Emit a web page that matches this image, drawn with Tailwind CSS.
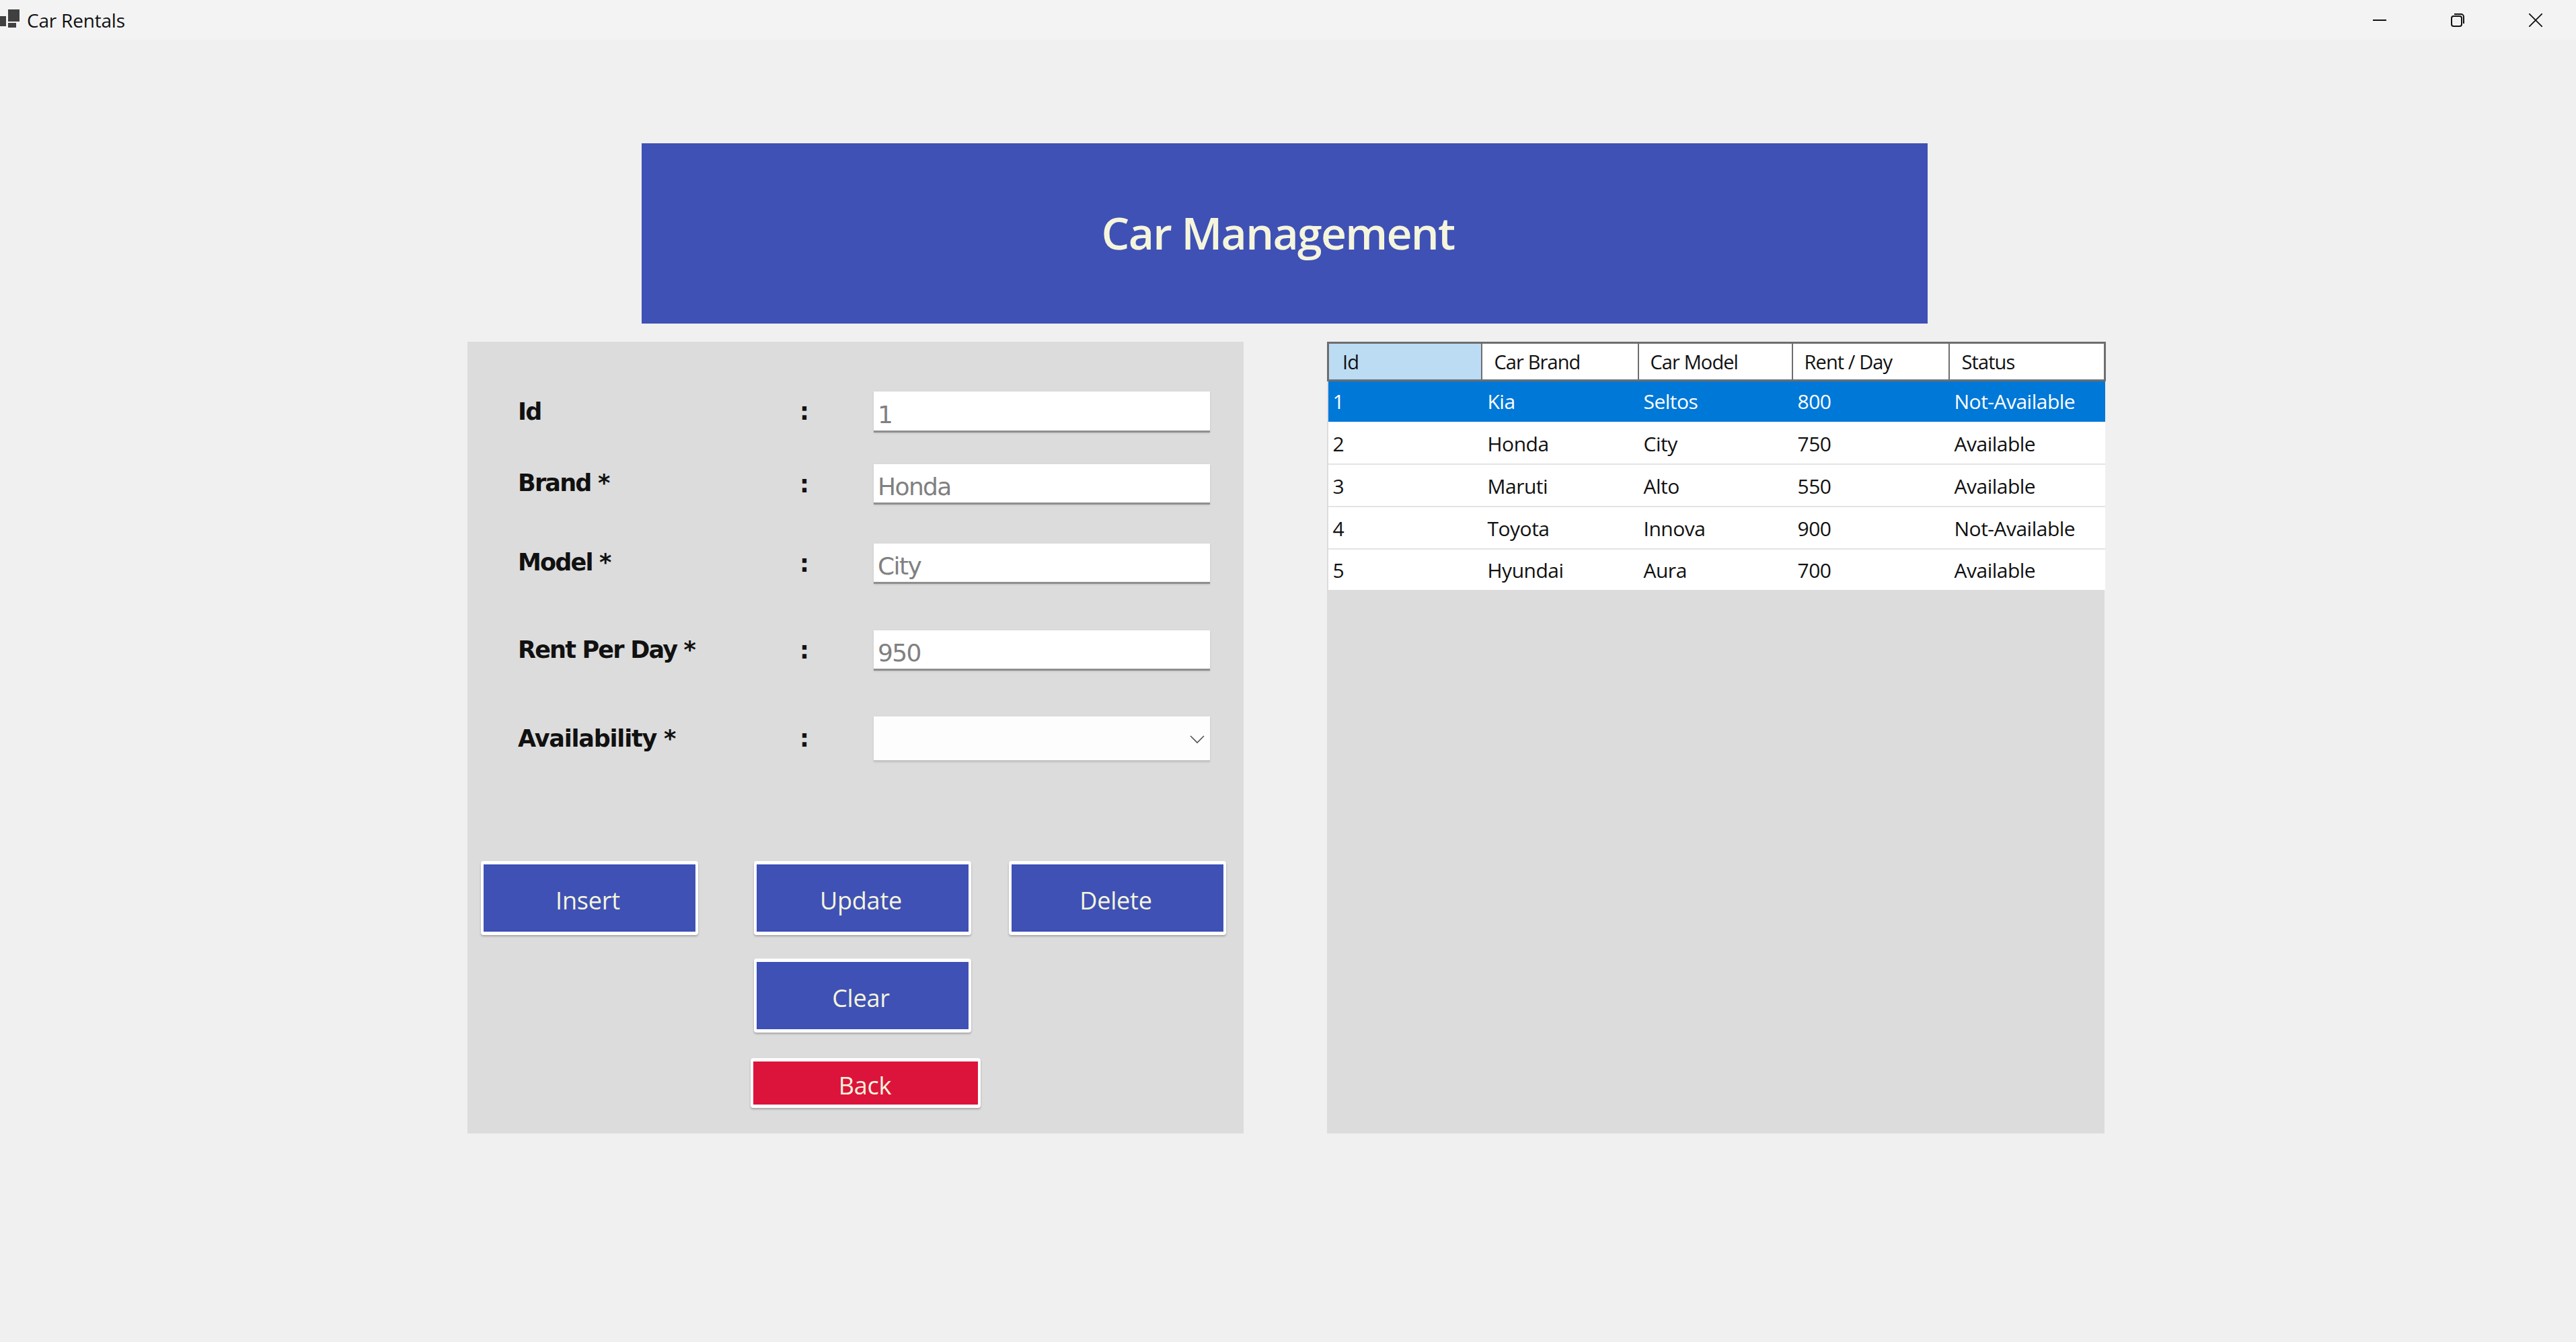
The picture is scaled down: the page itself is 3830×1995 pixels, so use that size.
<!DOCTYPE html>
<html lang="en">
<head>
    <meta charset="UTF-8">
    <title>Car Rentals</title>
    <script src="https://cdn.jsdelivr.net/npm/@tailwindcss/browser@4"></script>
</head>
<body class="bg-[#f0f0f0] font-['Open_Sans',sans-serif] overflow-hidden">
<div class="w-[3830px] h-[1995px] flex flex-col">

    <!-- title bar -->
    <header class="h-[59px] shrink-0 bg-[#f3f3f3] flex items-center">
        <svg class="w-[30px] h-[59px] shrink-0" viewBox="0 0 30 59" fill="#404040">
            <rect x="12" y="14" width="17" height="18"/>
            <rect x="0" y="24" width="9" height="15"/>
            <rect x="12" y="34" width="12" height="7"/>
        </svg>
        <span class="ml-[10px] text-[28px] tracking-[-0.2px] text-[#111]">Car Rentals</span>
        <div class="ml-auto flex items-center pr-[50px] gap-[96px]">
            <svg class="w-[20px] h-[20px]" viewBox="0 0 20 20" fill="none" stroke="#111" stroke-width="2"><path d="M0 10h20"/></svg>
            <svg class="w-[20px] h-[20px]" viewBox="0 0 20 20" fill="none" stroke="#111" stroke-width="2"><rect x="1" y="4" width="15" height="15" rx="3"/><path d="M5 1h10a4 4 0 0 1 4 4v10"/></svg>
            <svg class="w-[20px] h-[20px]" viewBox="0 0 20 20" fill="none" stroke="#111" stroke-width="1.8"><path d="M0 0l20 20M20 0L0 20"/></svg>
        </div>
    </header>

    <main class="pl-[695px] pt-[154px] flex flex-col items-start">
        <div class="ml-[259px] w-[1912px] h-[268px] bg-[#3f51b5] flex items-center justify-center pr-[20px] pb-[4px]">
            <h1 class="text-[66px] font-semibold tracking-[-1.7px] text-[#f5f5dc]">Car Management</h1>
        </div>

        <div class="mt-[27px] flex gap-[124px]">

            <!-- form panel -->
            <section class="w-[1154px] h-[1177px] bg-[#dcdcdc] pt-[74px]">
                <div class="flex items-center h-[61px] pl-[75px]">
                    <label class="w-[415px] font-['DejaVu_Sans',sans-serif] font-bold text-[35px] tracking-[-1.8px] text-[#111]">Id</label>
                    <span class="w-[22px] text-center font-['DejaVu_Sans',sans-serif] font-bold text-[35px] text-[#111]">:</span>
                    <input class="ml-[92px] w-[500px] h-[61px] bg-white border-b-[3px] border-[#8f8f8f] shadow-sm pl-[6px] text-[36px] tracking-[-1.6px] text-[#808080] font-['DejaVu_Sans',sans-serif] pt-[10px]" value="1">
                </div>
                <div class="flex items-center h-[60px] mt-[47px] pl-[75px]">
                    <label class="w-[415px] font-['DejaVu_Sans',sans-serif] font-bold text-[35px] tracking-[-1.8px] text-[#111] -mt-[4px]">Brand *</label>
                    <span class="w-[22px] text-center font-['DejaVu_Sans',sans-serif] font-bold text-[35px] text-[#111]">:</span>
                    <input class="ml-[92px] w-[500px] h-[60px] bg-white border-b-[3px] border-[#8f8f8f] shadow-sm pl-[6px] text-[36px] tracking-[-1.6px] text-[#808080] font-['DejaVu_Sans',sans-serif] pt-[9px]" value="Honda">
                </div>
                <div class="flex items-center h-[60px] mt-[58px] pl-[75px]">
                    <label class="w-[415px] font-['DejaVu_Sans',sans-serif] font-bold text-[35px] tracking-[-1.8px] text-[#111] -mt-[4px]">Model *</label>
                    <span class="w-[22px] text-center font-['DejaVu_Sans',sans-serif] font-bold text-[35px] text-[#111]">:</span>
                    <input class="ml-[92px] w-[500px] h-[60px] bg-white border-b-[3px] border-[#8f8f8f] shadow-sm pl-[6px] text-[36px] tracking-[-1.6px] text-[#808080] font-['DejaVu_Sans',sans-serif] pt-[9px]" value="City">
                </div>
                <div class="flex items-center h-[60px] mt-[69px] pl-[75px]">
                    <label class="w-[415px] font-['DejaVu_Sans',sans-serif] font-bold text-[35px] tracking-[-1.8px] text-[#111] -mt-[2px]">Rent Per Day *</label>
                    <span class="w-[22px] text-center font-['DejaVu_Sans',sans-serif] font-bold text-[35px] text-[#111]">:</span>
                    <input class="ml-[92px] w-[500px] h-[60px] bg-white border-b-[3px] border-[#8f8f8f] shadow-sm pl-[6px] text-[36px] tracking-[-1.6px] text-[#808080] font-['DejaVu_Sans',sans-serif] pt-[9px]" value="950">
                </div>
                <div class="flex items-center h-[67px] mt-[68px] pl-[75px]">
                    <label class="w-[415px] font-['DejaVu_Sans',sans-serif] font-bold text-[35px] tracking-[-1.2px] text-[#111]">Availability *</label>
                    <span class="w-[22px] text-center font-['DejaVu_Sans',sans-serif] font-bold text-[35px] text-[#111]">:</span>
                    <div class="ml-[92px] w-[500px] h-[67px] bg-[#fdfdfd] border-b-[2px] border-[#c4c4c4] shadow-sm flex items-center justify-end pr-[8px]">
                        <svg class="w-[22px] h-[14px] mt-[2px]" viewBox="0 0 22 14" fill="none" stroke="#555" stroke-width="1.6"><path d="M1 2l10 10L21 2"/></svg>
                    </div>
                </div>

                <div class="mt-[148px] pl-[20px] flex gap-[56px]">
                    <button class="w-[323px] h-[110px] pr-[5px] pt-[8px] bg-[#3f51b5] border-y-[5px] border-x-[4px] border-white rounded-[4px] shadow-[0_2px_3px_rgba(0,0,0,0.25)] text-[36px] tracking-[-0.2px] text-[#f5f5dc] mr-[27px]">Insert</button>
                    <button class="w-[323px] h-[110px] pr-[5px] pt-[8px] bg-[#3f51b5] border-y-[5px] border-x-[4px] border-white rounded-[4px] shadow-[0_2px_3px_rgba(0,0,0,0.25)] text-[36px] tracking-[-0.2px] text-[#f5f5dc]">Update</button>
                    <button class="w-[323px] h-[110px] pr-[5px] pt-[8px] bg-[#3f51b5] border-y-[5px] border-x-[4px] border-white rounded-[4px] shadow-[0_2px_3px_rgba(0,0,0,0.25)] text-[36px] tracking-[-0.2px] text-[#f5f5dc]">Delete</button>
                </div>
                <div class="mt-[35px] pl-[426px]">
                    <button class="w-[323px] h-[110px] pr-[5px] pt-[8px] bg-[#3f51b5] border-y-[5px] border-x-[4px] border-white rounded-[4px] shadow-[0_2px_3px_rgba(0,0,0,0.25)] text-[36px] tracking-[-0.2px] text-[#f5f5dc]">Clear</button>
                </div>
                <div class="mt-[38px] pl-[421px]">
                    <button class="w-[342px] h-[74px] pt-[8px] pr-[2px] bg-[#dc143c] border-y-[5px] border-x-[4px] border-white rounded-[4px] shadow-[0_2px_3px_rgba(0,0,0,0.25)] text-[36px] leading-[1] tracking-[-0.2px] text-[#f5f5dc]">Back</button>
                </div>
            </section>

            <!-- cars grid -->
            <section class="w-[1156px] h-[1177px] bg-[#dcdcdc]">
                <table class="w-[1155px] table-fixed border-collapse text-[30px] tracking-[-0.5px] text-[#111]">
                    <colgroup>
                        <col class="w-[228px]"><col class="w-[233px]"><col class="w-[229px]"><col class="w-[233px]"><col class="w-[232px]">
                    </colgroup>
                    <thead>
                        <tr class="h-[56px] bg-white text-left border-y-[3px] border-[#6e6e6e] text-[29px] tracking-[-0.9px]">
                            <th class="font-normal pl-[20px] bg-[#bcdcf4] border-l-[3px] border-r-2 border-[#6e6e6e]">Id</th>
                            <th class="font-normal pl-[18px] border-x-2 border-[#6e6e6e]">Car Brand</th>
                            <th class="font-normal pl-[17px] border-x-2 border-[#6e6e6e]">Car Model</th>
                            <th class="font-normal pl-[17px] border-x-2 border-[#6e6e6e]">Rent / Day</th>
                            <th class="font-normal pl-[18px] border-l-2 border-r-[3px] border-[#6e6e6e]">Status</th>
                        </tr>
                    </thead>
                    <tbody>
                        <tr class="h-[61px] bg-[#0078d7] text-white">
                            <td class="pl-[7px]">1</td><td class="pl-[9px]">Kia</td><td class="pl-[8px]">Seltos</td><td class="pl-[8px]">800</td><td class="pl-[8px]">Not-Available</td>
                        </tr>
                        <tr class="h-[63px] bg-white border-b-2 border-[#e4e4e4]">
                            <td class="pl-[7px] pt-[3px]">2</td><td class="pl-[9px] pt-[3px]">Honda</td><td class="pl-[8px] pt-[3px]">City</td><td class="pl-[8px] pt-[3px]">750</td><td class="pl-[8px] pt-[3px]">Available</td>
                        </tr>
                        <tr class="h-[63px] bg-white border-b-2 border-[#e4e4e4]">
                            <td class="pl-[7px] pt-[3px]">3</td><td class="pl-[9px] pt-[3px]">Maruti</td><td class="pl-[8px] pt-[3px]">Alto</td><td class="pl-[8px] pt-[3px]">550</td><td class="pl-[8px] pt-[3px]">Available</td>
                        </tr>
                        <tr class="h-[63px] bg-white border-b-2 border-[#e4e4e4]">
                            <td class="pl-[7px] pt-[2px]">4</td><td class="pl-[9px] pt-[2px]">Toyota</td><td class="pl-[8px] pt-[2px]">Innova</td><td class="pl-[8px] pt-[2px]">900</td><td class="pl-[8px] pt-[2px]">Not-Available</td>
                        </tr>
                        <tr class="h-[61px] bg-white">
                            <td class="pl-[7px] pt-[2px]">5</td><td class="pl-[9px] pt-[2px]">Hyundai</td><td class="pl-[8px] pt-[2px]">Aura</td><td class="pl-[8px] pt-[2px]">700</td><td class="pl-[8px] pt-[2px]">Available</td>
                        </tr>
                    </tbody>
                </table>
            </section>
        </div>
    </main>
</div>
</body>
</html>
